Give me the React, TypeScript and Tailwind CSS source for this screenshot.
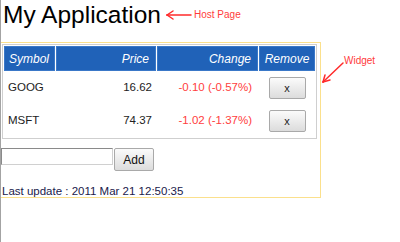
import React from "react";

interface Quote {
  symbol: string;
  price: string;
  change: string;
}

const quotes: Quote[] = [
  { symbol: "GOOG", price: "16.62", change: "-0.10 (-0.57%)" },
  { symbol: "MSFT", price: "74.37", change: "-1.02 (-1.37%)" },
];

function RemoveButton() {
  return (
    <button className="w-[37px] h-[22px] border border-[#a9a9a9] rounded-[2px] bg-gradient-to-b from-[#fbfbfb] to-[#dcdcdc] text-[11px] leading-none text-[#222]">
      x
    </button>
  );
}

export default function App() {
  return (
    <div className="relative w-[400px] h-[242px] overflow-hidden bg-white border-l border-[#a3a3a3] font-['Liberation_Sans',Arial,sans-serif]">
      {/* Host page title */}
      <div className="h-[42px] pl-[2px] pt-[1px]">
        <h1 className="text-[24.5px] leading-[28px] text-black">My Application</h1>
      </div>

      {/* Widget */}
      <div className="w-[320px] h-[156px] border border-l-0 border-[#fbe08c] pt-[1px] pl-[1px]">
        <table className="table-fixed w-[315px] border border-[#cfcfcf] border-separate border-spacing-[1px] text-[11.5px] text-[#222]">
          <colgroup>
            <col className="w-[51px]" />
            <col className="w-[100px]" />
            <col className="w-[101px]" />
            <col className="w-[56px]" />
          </colgroup>
          <thead>
            <tr className="h-[25px] bg-[#2062b8] text-white italic text-[12px]">
              <th className="font-normal text-left px-[4px] border border-[#3a78c8]">Symbol</th>
              <th className="font-normal text-right px-[6px] border border-[#3a78c8]">Price</th>
              <th className="font-normal text-right px-[6px] border border-[#3a78c8]">Change</th>
              <th className="font-normal text-center border border-[#3a78c8]">Remove</th>
            </tr>
          </thead>
          <tbody>
            {quotes.map((q) => (
              <tr key={q.symbol} className="h-[32px]">
                <td className="text-left px-[4px]">{q.symbol}</td>
                <td className="text-right px-[4px]">{q.price}</td>
                <td className="text-right px-[6px] text-[#ff4040]">{q.change}</td>
                <td className="text-center">
                  <RemoveButton />
                </td>
              </tr>
            ))}
          </tbody>
        </table>

        <div className="flex items-start mt-[9px] -ml-[1px]">
          <input
            type="text"
            className="w-[112px] h-[17px] border border-t-[#8a8a8a] border-l-[#8a8a8a] border-r-[#d0d0d0] border-b-[#d0d0d0] bg-white outline-none"
          />
          <button className="ml-[1px] w-[40px] h-[23px] border border-[#a9a9a9] rounded-[2px] bg-gradient-to-b from-[#fbfbfb] to-[#dcdcdc] text-[12px] text-[#111]">
            Add
          </button>
        </div>

        <div className="mt-[14px] text-[11.5px] leading-[13px] text-[#20204a]">
          Last update : 2011 Mar 21 12:50:35
        </div>
      </div>

      {/* Annotations */}
      <svg className="absolute inset-0 pointer-events-none" width="400" height="242">
        <g stroke="#ff2b2b" strokeWidth="1.5" fill="none" strokeLinecap="round">
          <line x1="166" y1="15" x2="190" y2="15" />
          <line x1="166" y1="15" x2="172" y2="11" />
          <line x1="166" y1="15" x2="172" y2="19" />
          <line x1="342" y1="63" x2="322" y2="82" />
          <line x1="322" y1="82" x2="324" y2="75" />
          <line x1="322" y1="82" x2="329" y2="80" />
        </g>
      </svg>
      <span className="absolute left-[193px] top-[9px] text-[10px] leading-[12px] text-[#ff3b3b]">
        Host Page
      </span>
      <span className="absolute left-[343px] top-[55px] text-[10px] leading-[12px] text-[#ff3b3b]">
        Widget
      </span>
    </div>
  );
}
